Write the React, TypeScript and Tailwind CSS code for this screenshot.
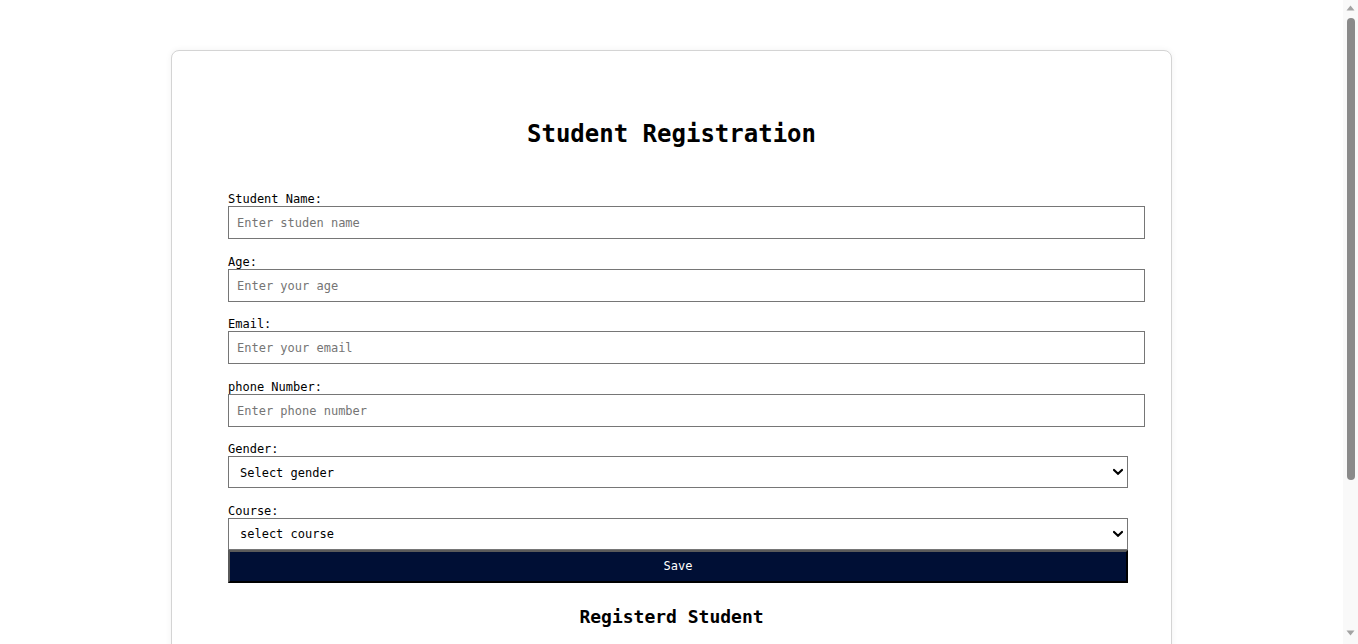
import React from "react";

const mono = { fontFamily: '"DejaVu Sans Mono", "Liberation Mono", monospace' };

function Chevron() {
  return (
    <svg
      className="pointer-events-none absolute right-[5px] top-1/2 -translate-y-1/2"
      width="10"
      height="7"
      viewBox="0 0 10 7"
    >
      <path d="M1 1.5 L5 5.2 L9 1.5" fill="none" stroke="#000" strokeWidth="2.2" strokeLinecap="square" />
    </svg>
  );
}

function TextField({ label, placeholder }: { label: string; placeholder: string }) {
  return (
    <div className="mb-[14.5px]">
      <label className="block pt-[1px] text-[12px] leading-[14px] text-black">{label}</label>
      <input
        type="text"
        placeholder={placeholder}
        className="box-border block h-[33px] w-[917px] border border-[#767676] bg-white px-[8px] pt-[1px] text-[12px] text-black outline-none placeholder:text-[#757575]"
        style={mono}
      />
    </div>
  );
}

function SelectField({ label, text, last }: { label: string; text: string; last?: boolean }) {
  return (
    <div className={last ? "" : "mb-[14.5px]"}>
      <label className="block pt-[1px] text-[12px] leading-[14px] text-black">{label}</label>
      <div className="relative w-[900px]">
        <select
          className="box-border block h-[32px] w-full appearance-none rounded-none border border-[#767676] bg-white pl-[11px] pt-[1px] text-[12px] text-black outline-none"
          style={mono}
          defaultValue=""
        >
          <option value="">{text}</option>
        </select>
        <Chevron />
      </div>
    </div>
  );
}

function FakeScrollbar() {
  return (
    <div className="fixed right-0 top-0 flex h-[644px] w-[15px] flex-col items-center bg-[#f9f9f9]">
      <svg width="9" height="6" viewBox="0 0 9 6" className="mt-[5px]">
        <path d="M0.5 5.5 L4.5 0.5 L8.5 5.5 Z" fill="#a3a3a3" />
      </svg>
      <div className="mt-[7px] h-[462px] w-[8px] rounded-[4px] bg-[#8a8a8a]" />
      <div className="flex-1" />
      <svg width="9" height="6" viewBox="0 0 9 6" className="mb-[8px]">
        <path d="M0.5 0.5 L8.5 0.5 L4.5 5.5 Z" fill="#a3a3a3" />
      </svg>
    </div>
  );
}

export default function App() {
  return (
    <div className="relative bg-white" style={mono}>
      <div className="w-[1343px] min-h-[850px] pt-[50px] pb-[50px]">
        <div className="mx-auto box-border min-h-[750px] w-[1001px] rounded-[8px] border border-[#d4d4d4] bg-white pl-[56px] pt-[69px] shadow-[0_0_6px_rgba(0,0,0,0.06)]">
          <h1 className="m-0 w-[887px] text-center text-[24px] font-bold leading-[28px] text-black">
            Student Registration
          </h1>
          <form className="mt-[43px] w-[900px]" onSubmit={(e) => e.preventDefault()}>
            <TextField label="Student Name:" placeholder="Enter studen name" />
            <TextField label="Age:" placeholder="Enter your age" />
            <TextField label="Email:" placeholder="Enter your email" />
            <TextField label="phone Number:" placeholder="Enter phone number" />
            <SelectField label="Gender:" text="Select gender" />
            <SelectField label="Course:" text="select course" last />
            <button
              type="submit"
              className="box-border block h-[33px] w-[900px] border-2 border-t-[#5a5a5a] border-l-[#5a5a5a] border-b-black border-r-black bg-[#000f35] text-[12px] text-white"
              style={mono}
            >
              Save
            </button>
          </form>
          <h2 className="m-0 mt-[23px] w-[887px] text-center text-[18px] font-bold leading-[22px] text-black">
            Registerd Student
          </h2>
        </div>
      </div>
      <FakeScrollbar />
    </div>
  );
}
